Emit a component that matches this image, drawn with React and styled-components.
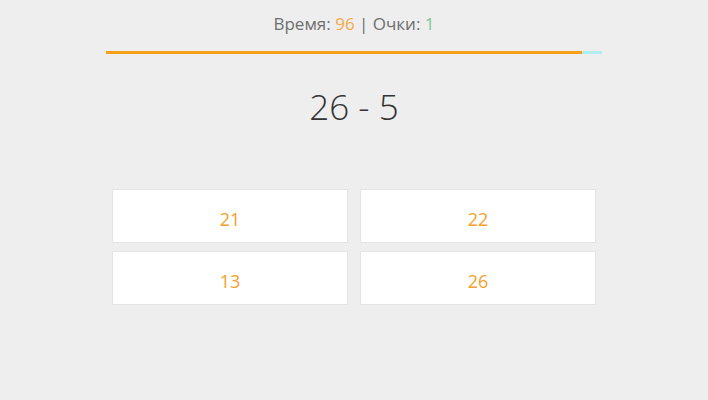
import React from "react";
import styled, { createGlobalStyle } from "styled-components";

const Global = createGlobalStyle`
  html, body { margin: 0; padding: 0; background: #eeeeee; }
  body { font-family: "Open Sans", "Noto Sans", "Liberation Sans", sans-serif; }
`;

const Page = styled.div`
  width: 708px;
  height: 400px;
  display: flex;
  flex-direction: column;
  align-items: center;
  background: #eeeeee;
`;

const Header = styled.div`
  margin-top: 12px;
  font-size: 17px;
  line-height: 24px;
  color: #6e6e6e;
  font-weight: 400;
`;

const Value = styled.span`
  color: ${(p) => p.$color};
`;

const Track = styled.div`
  margin-top: 15px;
  width: 496px;
  height: 3px;
  background: #aef0ee;
  display: flex;
`;

const Fill = styled.div`
  height: 100%;
  background: #f9a01b;
`;

const Problem = styled.div`
  margin-top: 29px;
  font-size: 35px;
  line-height: 48px;
  font-weight: 300;
  color: #333333;
`;

const Answers = styled.div`
  margin-top: 58px;
  display: grid;
  grid-template-columns: 236px 236px;
  column-gap: 12px;
  row-gap: 8px;
`;

const Answer = styled.button`
  box-sizing: border-box;
  height: 54px;
  background: #ffffff;
  border: 1px solid #e4e4e4;
  font-family: inherit;
  font-size: 18px;
  color: #f5a02a;
  padding: 5px 0 0;
  cursor: pointer;
`;

export default function App() {
  const time = 96;
  const score = 1;
  const answers = [21, 22, 13, 26];
  return (
    <Page>
      <Global />
      <Header>
        Время: <Value $color="#f7a84a">{time}</Value> | Очки:{" "}
        <Value $color="#80c98c">{score}</Value>
      </Header>
      <Track>
        <Fill style={{ width: `${time}%` }} />
      </Track>
      <Problem>26 - 5</Problem>
      <Answers>
        {answers.map((a) => (
          <Answer key={a}>{a}</Answer>
        ))}
      </Answers>
    </Page>
  );
}
